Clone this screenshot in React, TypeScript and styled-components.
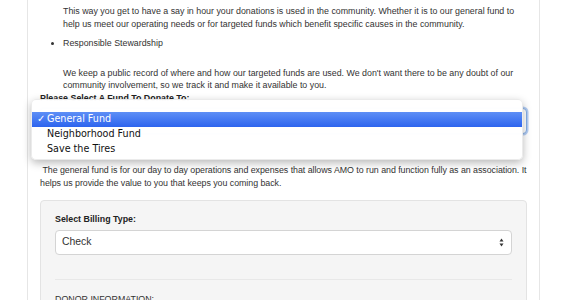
import React from "react";
import styled, { createGlobalStyle } from "styled-components";

const GlobalStyle = createGlobalStyle`
  html, body {
    margin: 0;
    padding: 0;
    background: #fff;
    overflow: hidden;
  }
  body {
    font-family: "Liberation Sans", Arial, sans-serif;
    color: #333;
  }
`;

const Page = styled.div`
  width: 569px;
  height: 300px;
  overflow: hidden;
`;

const Container = styled.div`
  margin-left: 27px;
  width: 487px;
  padding: 5px 12px 0 12px;
  border-left: 1px solid #e6e6e6;
  border-right: 1px solid #e6e6e6;
  min-height: 300px;
  font-size: 8.85px;
  line-height: 12.5px;
`;

const Indented = styled.p<{ $top?: number }>`
  margin: ${(p) => p.$top ?? 0}px 0 0 23px;
`;

const BulletList = styled.ul`
  margin: 7px 0 0 0;
  padding: 0 0 0 23px;
  list-style: disc;
  li {
    margin: 0;
  }
`;

const Label = styled.div`
  font-weight: bold;
  color: #222;
`;

const SelectWrap = styled.div`
  position: relative;
  margin-top: 4px;
`;

const FocusSelect = styled.div`
  height: 24px;
  border: 1px solid #84aee6;
  border-radius: 4px;
  box-shadow: 0 0 0 1.5px rgba(120, 165, 235, 0.55);
  background: #fff;
`;

const Menu = styled.div`
  position: absolute;
  top: -9px;
  left: -9px;
  width: 490px;
  padding: 12px 0 2px 0;
  background: rgba(255, 255, 255, 0.98);
  border-radius: 5px;
  border: 1px solid rgba(0, 0, 0, 0.08);
  box-shadow: 0 3px 9px rgba(0, 0, 0, 0.28);
  font-family: "DejaVu Sans", "Liberation Sans", sans-serif;
  font-size: 9.6px;
  z-index: 5;
`;

const MenuItem = styled.div<{ $active?: boolean }>`
  display: flex;
  align-items: center;
  height: 15px;
  padding-left: 5px;
  color: ${(p) => (p.$active ? "#fff" : "#111")};
  background: ${(p) =>
    p.$active ? "linear-gradient(#5e8ff6, #2d64ee)" : "transparent"};
`;

const Check = styled.span`
  width: 10px;
  font-size: 10px;
`;

const Help = styled.p`
  margin: 30px -10px 0 0;
  letter-spacing: -0.04px;
  white-space: pre-wrap;
`;

const Well = styled.div`
  margin-top: 11px;
  background: #f5f5f5;
  border: 1px solid #e3e3e3;
  border-radius: 4px;
  padding: 12px 14px 0 14px;
  height: 120px;
`;

const PlainSelect = styled.div`
  margin-top: 4px;
  height: 23px;
  border: 1px solid #d4d4d4;
  border-radius: 4px;
  background: #fff;
  display: flex;
  align-items: center;
  justify-content: space-between;
  padding: 0 7px 0 6px;
  font-size: 10.4px;
  color: #333;
`;

const Rule = styled.hr`
  border: none;
  border-top: 1px solid #e8e8e8;
  margin: 24px 0 0 0;
`;

const SectionTitle = styled.div`
  margin-top: 13px;
  color: #333;
  text-transform: uppercase;
`;

const Arrows = () => (
  <svg width="5" height="9" viewBox="0 0 5 9">
    <path d="M2.5 0.5 L4.5 3.5 L0.5 3.5 Z" fill="#333" />
    <path d="M2.5 8.5 L4.5 5.5 L0.5 5.5 Z" fill="#333" />
  </svg>
);

const funds = ["General Fund", "Neighborhood Fund", "Save the Tires"];

const App = () => {
  return (
    <Page>
      <GlobalStyle />
      <Container>
        <Indented>
          This way you get to have a say in hour your donations is used in the
          community. Whether it is to our general fund to help us meet our
          operating needs or for targeted funds which benefit specific causes in
          the community.
        </Indented>
        <BulletList>
          <li>Responsible Stewardship</li>
        </BulletList>
        <Indented $top={17}>
          We keep a public record of where and how our targeted funds are used.
          We don't want there to be any doubt of our community involvement, so
          we track it and make it available to you.
        </Indented>
        <Label>Please Select A Fund To Donate To:</Label>
        <SelectWrap>
          <FocusSelect />
          <Menu>
            {funds.map((f, i) => (
              <MenuItem key={f} $active={i === 0}>
                <Check>{i === 0 ? "✓" : ""}</Check>
                {f}
              </MenuItem>
            ))}
          </Menu>
        </SelectWrap>
        <Help>
          {" "}The general fund is for our day to day operations and expenses
          that allows AMO to run and function fully as an association. It helps
          us provide the value to you that keeps you coming back.
        </Help>
        <Well>
          <Label>Select Billing Type:</Label>
          <PlainSelect>
            <span>Check</span>
            <Arrows />
          </PlainSelect>
          <Rule />
          <SectionTitle>Donor Information:</SectionTitle>
        </Well>
      </Container>
    </Page>
  );
};

export default App;
